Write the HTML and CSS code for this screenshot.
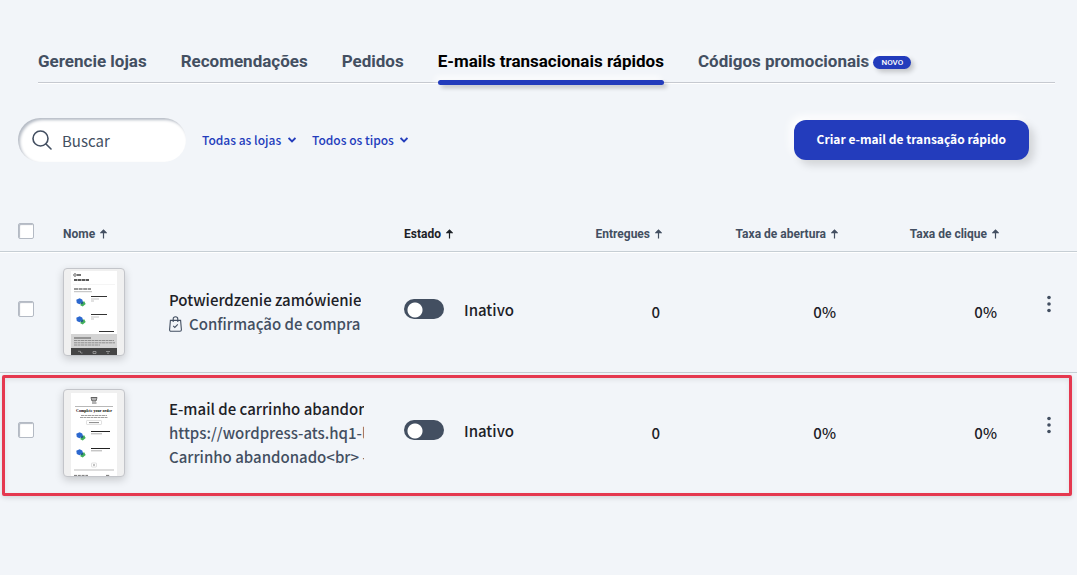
FILE: index.html
```html
<!DOCTYPE html>
<html lang="pt">
<head>
    <meta charset="UTF-8">
    <meta name="viewport" content="width=device-width, initial-scale=1.0">
    <title>E-mails transacionais rápidos</title>
    <link rel="stylesheet" href="styles.css">
</head>
<body>

<!-- Abas -->
<nav class="tabs">
    <a href="#">Gerencie lojas</a>
    <a href="#">Recomendações</a>
    <a href="#">Pedidos</a>
    <a href="#" class="active">E-mails transacionais rápidos</a>
    <a href="#">Códigos promocionais <span class="badge">NOVO</span></a>
</nav>

<main>
    <!-- Busca e filtros -->
    <div class="toolbar">
        <label class="search">
            <svg width="20" height="20" viewBox="0 0 20 20" fill="none" stroke="#434f61" stroke-width="1.6" stroke-linecap="round">
                <circle cx="8.5" cy="8.5" r="7.5"/>
                <path d="M14 14l5 5"/>
            </svg>
            <input type="text" placeholder="Buscar" aria-label="Buscar">
        </label>
        <div class="filter">
            <select aria-label="Lojas"><option>Todas as lojas</option></select>
            <svg width="8" height="6" viewBox="0 0 8 6" fill="none" stroke="#233cbc" stroke-width="1.8"><path d="M.6 1L4 4.4 7.4 1"/></svg>
        </div>
        <div class="filter">
            <select aria-label="Tipos"><option>Todos os tipos</option></select>
            <svg width="8" height="6" viewBox="0 0 8 6" fill="none" stroke="#233cbc" stroke-width="1.8"><path d="M.6 1L4 4.4 7.4 1"/></svg>
        </div>
        <button class="create-btn">Criar e-mail de transação rápido</button>
    </div>

    <svg width="0" height="0" class="defs">
        <symbol id="arrow" viewBox="0 0 7 10"><path d="M3.5 9.5V1.5M.9 3.6h5.2L3.5 1z" fill="currentColor" stroke="currentColor" stroke-width="1.2"/></symbol>
        <symbol id="dots" viewBox="0 0 4 18"><g fill="#434f61"><circle cx="2" cy="2.5" r="1.8"/><circle cx="2" cy="9" r="1.8"/><circle cx="2" cy="15.5" r="1.8"/></g></symbol>
        <symbol id="product" viewBox="0 0 10 9">
            <path d="M.3 1.8L3.6.3l2.6 1.2.8 2.6-3.5 2.1L.8 5z" fill="#2c68cf"/>
            <path d="M5 4.6l3.2-1.4 1.5 2.8-3 2.4-2.4-1.2z" fill="#43b05c"/>
            <path d="M4.6 4.9l2.2-1.2.4 1.6-1.6 1z" fill="#1d4d8d"/>
        </symbol>
    </svg>

    <!-- Lista de e-mails -->
    <div class="list">
        <table>
            <colgroup>
                <col class="col-check">
                <col>
                <col class="col-state">
                <col class="col-sent">
                <col class="col-open">
                <col class="col-click">
                <col class="col-menu">
            </colgroup>
            <thead>
                <tr>
                    <th><input type="checkbox" aria-label="Selecionar tudo"></th>
                    <th>Nome <svg class="arrow"><use href="#arrow"/></svg></th>
                    <th class="sorted">Estado <svg class="arrow"><use href="#arrow"/></svg></th>
                    <th class="num">Entregues <svg class="arrow"><use href="#arrow"/></svg></th>
                    <th class="num">Taxa de abertura <svg class="arrow"><use href="#arrow"/></svg></th>
                    <th class="num">Taxa de clique <svg class="arrow"><use href="#arrow"/></svg></th>
                    <th></th>
                </tr>
            </thead>
            <tbody>
                <tr>
                    <td class="check"><input type="checkbox" aria-label="Selecionar Potwierdzenie zamówienie"></td>
                    <td>
                        <div class="mail">
                            <svg class="thumb" viewBox="0 0 60 86">
                                <rect x="7" y="2" width="46" height="84" fill="#fff"/>
                                <circle cx="11" cy="6" r="1.3" fill="none" stroke="#333" stroke-width=".7"/>
                                <path d="M13 6h4" stroke="#444" stroke-width="1.3"/>
                                <path d="M10 11h15" stroke="#222" stroke-width="1.5" stroke-dasharray="3.5 .5"/>
                                <path d="M9 15.5h42" stroke="#eee" stroke-width=".6"/>
                                <path d="M10 20h17" stroke="#333" stroke-width="1.2" stroke-dasharray="4 .6"/>
                                <path d="M10 22.7h18" stroke="#aaa" stroke-width=".8"/>
                                <use href="#product" x="12" y="29" width="10" height="9"/>
                                <path d="M27 27.5h16" stroke="#333" stroke-width="1.1"/>
                                <path d="M27 30h8M27 32h3" stroke="#aaa" stroke-width=".7"/>
                                <use href="#product" x="12" y="47" width="10" height="9"/>
                                <path d="M27 45.5h16" stroke="#333" stroke-width="1.1"/>
                                <path d="M27 48h8M27 50h3" stroke="#aaa" stroke-width=".7"/>
                                <path d="M35 62.5h15" stroke="#333" stroke-width="1"/>
                                <rect x="7" y="65" width="46" height="14" fill="#d4d4d4"/>
                                <path d="M10 69h17" stroke="#555" stroke-width="1"/>
                                <path d="M10 71.5h40M10 73.8h41M10 76h26" stroke="#888" stroke-width=".9" stroke-dasharray="3 .5"/>
                                <rect x="7" y="79" width="46" height="7" fill="#454545"/>
                                <g fill="none" stroke="#aaa" stroke-width=".7"><path d="M14 82.3h2.5v1.7M17 84h1.5M29 84.5v-2h3v2zM42 82.5h4M43 84.2h2"/></g>
                            </svg>
                            <div class="info">
                                <div class="title">Potwierdzenie zamówienie</div>
                                <div class="kind">
                                    <svg width="13" height="16" viewBox="0 0 13 16" fill="none" stroke="#434f61" stroke-width="1.1">
                                        <path d="M1.4 4.4h10.2l.8 9.4q0 1.4-1.4 1.4H2Q.6 15.2.6 13.8z"/>
                                        <path d="M4.2 6V3q0-2.3 2.3-2.3T8.8 3v3M4.2 9.8l1.6 1.6 3-3"/>
                                    </svg>
                                    <span>Confirmação de compra</span>
                                </div>
                            </div>
                        </div>
                    </td>
                    <td class="state"><label class="toggle"><input type="checkbox" role="switch"><span>Inativo</span></label></td>
                    <td class="num">0</td>
                    <td class="num">0%</td>
                    <td class="num">0%</td>
                    <td class="more"><button aria-label="Mais opções"><svg width="4" height="18"><use href="#dots"/></svg></button></td>
                </tr>
                <tr>
                    <td class="check"><input type="checkbox" aria-label="Selecionar E-mail de carrinho abandonado"></td>
                    <td>
                        <div class="mail">
                            <svg class="thumb" viewBox="0 0 60 86">
                                <rect x="7" y="3" width="46" height="83" fill="#fff"/>
                                <path d="M27 7.5h6l-1 3.5h-4zM28 13h4.5M29 7.5V11M31 7.5V11" fill="none" stroke="#555" stroke-width=".9"/>
                                <path d="M11 16.5h38" stroke="#999" stroke-width=".7"/>
                                <text x="30" y="21.5" class="thumb-title">Complete your order</text>
                                <path d="M17 25.5h26M16 27.5h28" stroke="#888" stroke-width=".8" stroke-dasharray="3 .5"/>
                                <rect x="22.5" y="30.5" width="15" height="4" rx=".6" fill="#fff" stroke="#ccc" stroke-width=".6"/>
                                <path d="M25 32.6h10" stroke="#666" stroke-width=".8"/>
                                <use href="#product" x="12" y="42" width="10" height="9"/>
                                <path d="M27 41.5h19" stroke="#222" stroke-width="1.2"/>
                                <path d="M27 43.8h11" stroke="#999" stroke-width=".8"/>
                                <use href="#product" x="12" y="59" width="10" height="9"/>
                                <path d="M27 58.5h19" stroke="#222" stroke-width="1.2"/>
                                <path d="M27 60.8h11" stroke="#999" stroke-width=".8"/>
                                <rect x="27.5" y="73" width="5" height="4" rx=".6" fill="#fff" stroke="#ccc" stroke-width=".6"/>
                                <path d="M29 75h2" stroke="#666" stroke-width=".8"/>
                                <path d="M10 80h40" stroke="#aaa" stroke-width=".8"/>
                                <path d="M10 85.4h14M42 85.4h4" stroke="#777" stroke-width="1" stroke-dasharray="3 .8"/>
                            </svg>
                            <div class="info">
                                <div class="title">E-mail de carrinho abandonado</div>
                                <div>https://wordpress-ats.hq1-lab</div>
                                <div>Carrinho abandonado&lt;br&gt; - 1 hora</div>
                            </div>
                        </div>
                    </td>
                    <td class="state"><label class="toggle"><input type="checkbox" role="switch"><span>Inativo</span></label></td>
                    <td class="num">0</td>
                    <td class="num">0%</td>
                    <td class="num">0%</td>
                    <td class="more"><button aria-label="Mais opções"><svg width="4" height="18"><use href="#dots"/></svg></button></td>
                </tr>
            </tbody>
        </table>
        <!-- Moldura de destaque sobre a última linha -->
        <div class="highlight"></div>
    </div>
</main>

</body>
</html>
```

FILE: styles.css
```css
* {
    box-sizing: border-box;
}
body {
    margin: 0;
    background-color: #f2f5f9;
    color: #1d2127;
    font-family: "Noto Sans CJK JP", "Open Sans", sans-serif;
    font-size: 15px;
    font-weight: 500;
}
button, input, select {
    font: inherit;
}
main {
    padding-bottom: 40px;
}
.tabs {
    display: flex;
    gap: 34px;
    margin: 40px 22px 0 38px;
    height: 43px;
    border-bottom: 1px solid #c6c9d0;
    box-shadow: 0 1px 0 #fff;
}
.tabs a {
    position: relative;
    font-family: Roboto, sans-serif;
    font-size: 17px;
    font-weight: 700;
    line-height: 43px;
    color: #434f61;
    text-decoration: none;
    white-space: nowrap;
}
.tabs .active {
    color: #000;
}
.tabs .active::after {
    content: "";
    position: absolute;
    left: 0;
    right: 0;
    bottom: -3px;
    height: 5px;
    border-radius: 3px;
    background-color: #233cbc;
    box-shadow: 3px 3px 4px rgba(0, 0, 0, 0.2), -3px -3px 6px #fff;
}
.badge {
    display: inline-block;
    padding: 0 8px;
    border-radius: 7px;
    background-color: #233cbc;
    color: #fff;
    font-size: 8px;
    font-weight: 500;
    line-height: 13px;
    vertical-align: middle;
    box-shadow: 3px 3px 5px rgba(0, 0, 0, 0.2), -3px -3px 6px #fff;
}
.toolbar {
    display: flex;
    align-items: center;
    gap: 16px;
    margin: 35px 48px 0 18px;
}
.search {
    display: flex;
    align-items: center;
    gap: 10px;
    width: 168px;
    height: 44px;
    padding: 0 14px;
    border-radius: 22px;
    background-color: #fff;
    box-shadow: inset 2px 2px 3px #b4bac4;
}
.search svg {
    flex: none;
}
.search input {
    width: 100%;
    padding: 0;
    border: none;
    outline: none;
    background: none;
    font-weight: 400;
}
.search input::placeholder {
    color: #434f61;
    opacity: 1;
}
.filter {
    position: relative;
}
.filter select {
    display: block;
    appearance: none;
    padding: 0 14px 2px 0;
    border: none;
    background: none;
    color: #233cbc;
    font-size: 12px;
    cursor: pointer;
}
.filter svg {
    position: absolute;
    right: 0;
    top: 50%;
    margin-top: -3px;
    pointer-events: none;
}
.create-btn {
    height: 40px;
    margin-left: auto;
    padding: 0 23px 3px;
    border: none;
    border-radius: 12px;
    background-color: #233cbc;
    color: #fff;
    font-size: 12px;
    font-weight: 700;
    box-shadow: 5px 5px 8px rgba(0, 0, 0, 0.14), -4px -4px 8px #fff;
    cursor: pointer;
}
.create-btn:hover {
    background-color: #1b309a;
}
.defs {
    display: block;
}
.list {
    position: relative;
    margin-top: 50px;
}
table {
    width: 100%;
    border-spacing: 0;
    table-layout: fixed;
}
.col-check {
    width: 63px;
}
.col-state {
    width: 140px;
}
.col-sent {
    width: 118px;
}
.col-open {
    width: 176px;
}
.col-click {
    width: 161px;
}
.col-menu {
    width: 78px;
}
th {
    height: 40px;
    padding: 4px 0 0;
    border-bottom: 1px solid #c6ced4;
    box-shadow: 0 1px 0 #fff;
    color: #434f61;
    font-family: Roboto, sans-serif;
    font-size: 12px;
    font-weight: 700;
    text-align: left;
    white-space: nowrap;
}
th:first-child {
    padding: 0 0 2px 18px;
}
th.sorted {
    color: #1d2127;
}
.arrow {
    width: 7px;
    height: 10px;
    margin-left: 2px;
    vertical-align: -1px;
}
.num {
    text-align: right;
}
td {
    height: 120px;
    padding: 0;
    vertical-align: middle;
}
td.num {
    padding: 0 2px 2px 0;
}
tbody tr:first-child td {
    height: 121px;
    border-bottom: 1px solid #c6ced4;
}
td.check {
    padding: 0 0 6px 18px;
}
th input, .check input {
    display: block;
    appearance: none;
    width: 16px;
    height: 16px;
    margin: 0;
    border: 1px solid #b4bac4;
    border-radius: 2px;
    background-color: #fff;
    box-shadow: inset 1px 1px 1px #b4bac4;
}
.mail {
    display: flex;
    align-items: center;
    gap: 44px;
    padding-right: 40px;
}
.thumb {
    flex: none;
    width: 62px;
    height: 88px;
    border: 1px solid #c3c5ca;
    border-radius: 4px;
    background-color: #f0f0f0;
    box-shadow: 0 3px 8px rgba(0, 0, 0, 0.18);
}
.thumb-title {
    font-family: "Liberation Serif", serif;
    font-size: 4px;
    font-weight: 700;
    text-anchor: middle;
}
.info {
    min-width: 0;
    overflow: hidden;
    color: #434f61;
    line-height: 24px;
    white-space: nowrap;
}
.title {
    color: #1d2127;
}
.kind {
    display: flex;
    align-items: center;
    gap: 7px;
}
.kind svg {
    flex: none;
}
.state {
    padding-bottom: 6px;
}
.toggle {
    display: flex;
    align-items: center;
    gap: 20px;
}
.toggle input {
    appearance: none;
    flex: none;
    width: 40px;
    height: 20px;
    margin: 0;
    border-radius: 10px;
    background: radial-gradient(circle at 11px 11px, #fff 7px, transparent 8px) #434f61;
}
.more {
    padding: 0 26px 12px 0;
    text-align: right;
}
.more button {
    padding: 0;
    border: none;
    background: none;
    line-height: 0;
    cursor: pointer;
}
.highlight {
    position: absolute;
    right: 5px;
    bottom: -3px;
    left: 2px;
    height: 121px;
    border: 3px solid #e5384f;
    border-radius: 2px;
    box-shadow: 0 2px 5px rgba(0, 0, 0, 0.12), inset 0 2px 5px rgba(0, 0, 0, 0.08);
    pointer-events: none;
}
```
